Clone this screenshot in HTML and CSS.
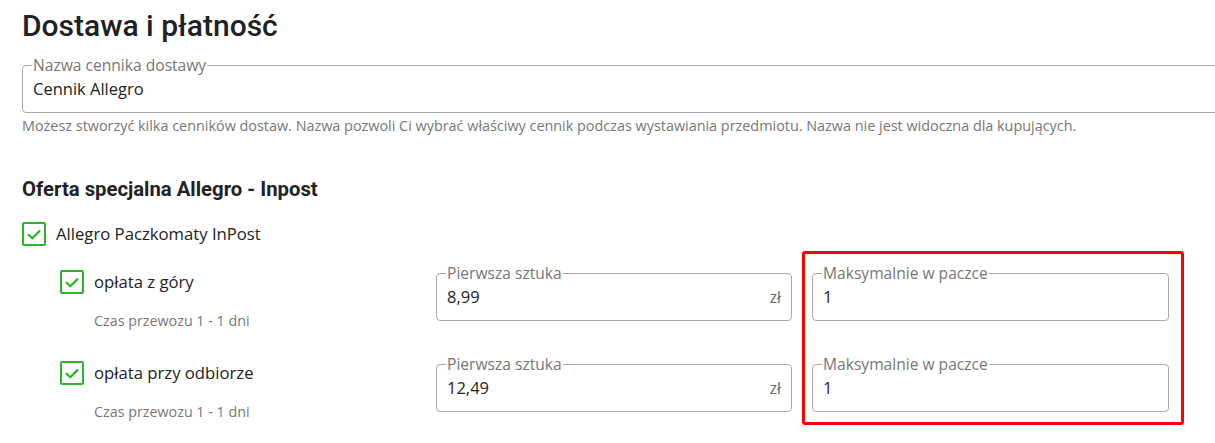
FILE: index.html
```html
<!DOCTYPE html>
<html lang="pl">
<head>
<meta charset="utf-8">
<title>Dostawa i płatność</title>
<link rel="stylesheet" href="styles.css">
</head>
<body>
<main class="page">
  <h1 class="title">Dostawa i płatność</h1>

  <fieldset class="field field-wide">
    <legend>Nazwa cennika dostawy</legend>
    <div class="value">Cennik Allegro</div>
  </fieldset>
  <p class="helper">Możesz stworzyć kilka cenników dostaw. Nazwa pozwoli Ci wybrać właściwy cennik podczas wystawiania przedmiotu. Nazwa nie jest widoczna dla kupujących.</p>

  <h2 class="section">Oferta specjalna Allegro - Inpost</h2>

  <div class="check-row">
    <span class="checkbox"><svg viewBox="0 0 20 20" width="20" height="20"><path d="M4 10.2 L8.3 14.2 L16 6.6" fill="none" stroke="#2bb52b" stroke-width="2.2"/></svg></span>
    <span class="check-label">Allegro Paczkomaty InPost</span>
  </div>

  <div class="options">
    <div class="col-options">
      <div class="option">
        <div class="check-row">
          <span class="checkbox"><svg viewBox="0 0 20 20" width="20" height="20"><path d="M4 10.2 L8.3 14.2 L16 6.6" fill="none" stroke="#2bb52b" stroke-width="2.2"/></svg></span>
          <span class="check-label">opłata z góry</span>
        </div>
        <p class="time">Czas przewozu 1 - 1 dni</p>
      </div>
      <div class="option">
        <div class="check-row">
          <span class="checkbox"><svg viewBox="0 0 20 20" width="20" height="20"><path d="M4 10.2 L8.3 14.2 L16 6.6" fill="none" stroke="#2bb52b" stroke-width="2.2"/></svg></span>
          <span class="check-label">opłata przy odbiorze</span>
        </div>
        <p class="time">Czas przewozu 1 - 1 dni</p>
      </div>
    </div>

    <div class="col-fields">
      <fieldset class="field">
        <legend>Pierwsza sztuka</legend>
        <div class="value value-row"><span>8,99</span><span class="unit">zł</span></div>
      </fieldset>
      <fieldset class="field">
        <legend>Pierwsza sztuka</legend>
        <div class="value value-row"><span>12,49</span><span class="unit">zł</span></div>
      </fieldset>
    </div>

    <div class="highlight">
      <fieldset class="field">
        <legend>Maksymalnie w paczce</legend>
        <div class="value value-num">1</div>
      </fieldset>
      <fieldset class="field">
        <legend>Maksymalnie w paczce</legend>
        <div class="value value-num">1</div>
      </fieldset>
    </div>
  </div>
</main>
</body>
</html>
```

FILE: styles.css
```css
html, body {
  margin: 0;
  padding: 0;
  background: #fff;
  overflow: hidden;
}

body {
  font-family: "Open Sans", "Liberation Sans", sans-serif;
  color: #222;
}

.page {
  padding-left: 22px;
  width: 1215px;
  box-sizing: border-box;
}

.title {
  font-family: Roboto, "Liberation Sans", sans-serif;
  font-weight: 500;
  font-size: 30px;
  line-height: 36px;
  color: #212121;
  margin: 8px 0 11px;
}

.field {
  margin: 0;
  border: 1px solid #aaa;
  border-radius: 4px;
  padding: 0 9px;
  min-width: 0;
  box-sizing: border-box;
  width: 356px;
}

.field legend {
  font-size: 15.6px;
  line-height: 20px;
  color: #777;
  padding: 0 1px;
}

.field-wide {
  width: 1220px;
}

.value {
  font-size: 16.5px;
  line-height: 24px;
  padding: 2px 1px 11px;
  color: #222;
}

.value-row {
  display: flex;
  justify-content: space-between;
}

.unit {
  font-size: 15.5px;
  color: #666;
}

.value-num {
  color: #1f2060;
}

.helper {
  font-size: 14.4px;
  line-height: 18px;
  color: #777;
  margin: 4px 0 0;
}

.section {
  font-family: Roboto, "Liberation Sans", sans-serif;
  font-weight: 700;
  font-size: 20.3px;
  line-height: 24px;
  color: #222;
  margin: 42px 0 0;
}

.check-row {
  display: flex;
  align-items: center;
  height: 24px;
  margin-top: 21px;
}

.checkbox {
  width: 24px;
  height: 24px;
  box-sizing: border-box;
  border: 2px solid #2bb52b;
  border-radius: 2px;
  display: flex;
  align-items: center;
  justify-content: center;
  flex: none;
}

.check-label {
  font-size: 16.7px;
  line-height: 24px;
  margin-left: 10px;
  color: #222;
}

.options {
  display: flex;
  align-items: flex-start;
  margin-top: 5px;
  margin-left: 38px;
}

.col-options {
  width: 376px;
  padding-top: 19px;
  display: flex;
  flex-direction: column;
  gap: 31px;
}

.option .check-row {
  margin-top: 0;
}

.time {
  font-size: 14.3px;
  line-height: 18px;
  color: #777;
  margin: 18px 0 0 34px;
}

.col-fields {
  padding-top: 12px;
  display: flex;
  flex-direction: column;
  gap: 33px;
}

.highlight {
  margin-left: 10px;
  border: 3px solid #ff0000;
  border-radius: 3px;
  padding: 9px 12px 10px 7px;
  display: flex;
  flex-direction: column;
  gap: 33px;
}

.highlight .field {
  width: 357px;
}
```
